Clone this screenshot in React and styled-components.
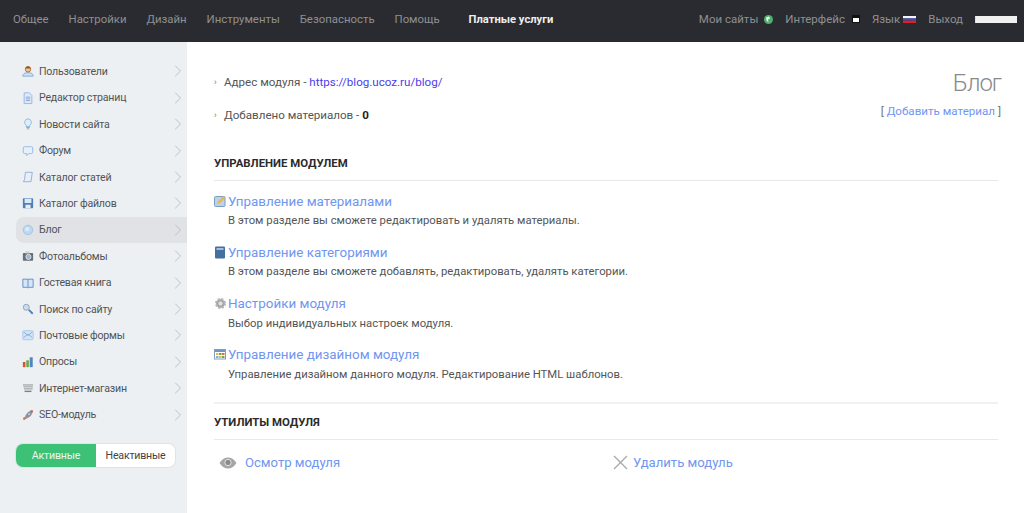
import React from "react";
import styled, { createGlobalStyle } from "styled-components";
import { ChevronRight } from "lucide-react";

const Global = createGlobalStyle`
  html, body { margin: 0; padding: 0; background: #fff; }
  body { font-family: Roboto, "Noto Sans", sans-serif; font-size: 12px; color: #4a4a4a; }
  a { text-decoration: none; }
`;

const Page = styled.div`
  width: 1024px;
  height: 513px;
  overflow: hidden;
  display: flex;
  flex-direction: column;
`;
const TopBar = styled.header`
  height: 42px;
  flex: none;
  background: #2a2b30;
  display: flex;
  align-items: center;
  padding: 0 7px 4px 13px;
  box-sizing: border-box;
`;
const MainNav = styled.nav`
  display: flex;
  align-items: center;
  gap: 19.9px;
`;
const NavLink = styled.a`
  color: #8f9090;
  font-size: 11.4px;
  white-space: nowrap;
`;
const RightLink = styled(NavLink)`
  font-size: 11.5px;
`;
const PaidLink = styled(NavLink)`
  color: #eeeeee;
  font-weight: 700;
  font-size: 11.2px;
  margin-left: 9px;
`;
const RightNav = styled.nav`
  margin-left: auto;
  display: flex;
  align-items: center;
  gap: 12px;
`;
const NavGroup = styled.span`
  display: flex;
  align-items: center;
  gap: ${(p) => p.$gap || 3}px;
`;
const UserBox = styled.span`
  width: 42px;
  height: 7px;
  background: #f0f0f0;
  border-left: 1px solid #cfe3f0;
  box-sizing: border-box;
`;
const Body = styled.div`
  flex: 1;
  display: flex;
  min-height: 0;
`;
const Sidebar = styled.aside`
  width: 187px;
  flex: none;
  background: #edf0f2;
  padding-top: 16.3px;
  box-sizing: border-box;
`;
const MenuList = styled.ul`
  list-style: none;
  margin: 0;
  padding: 0 0 0 16px;
`;
const MenuItem = styled.li`
  height: 26.4px;
  display: flex;
  align-items: center;
  padding-left: 6px;
  border-radius: 8px 0 0 8px;
  background: ${(p) => (p.$active ? "#e0e2e5" : "transparent")};
  color: #505458;
  font-size: 10.6px;
  letter-spacing: -0.2px;
`;
const MenuIcon = styled.span`
  width: 12px;
  height: 14px;
  display: flex;
  align-items: center;
  justify-content: center;
  margin-right: 5px;
  flex: none;
`;
const MenuLabel = styled.span`
  flex: 1;
  white-space: nowrap;
`;
const Chevron = styled(ChevronRight)`
  color: #b4b8bb;
  margin-right: -1px;
  flex: none;
`;
const Toggle = styled.div`
  display: flex;
  margin: 16px 0 0 16px;
  width: 159px;
  height: 23px;
  border-radius: 7px;
  overflow: hidden;
  box-shadow: 0 0 0 1px #e0e3e5;
`;
const ToggleOption = styled.div`
  flex: ${(p) => (p.$active ? "0 0 80px" : "1")};
  display: flex;
  align-items: center;
  justify-content: center;
  font-size: 10.6px;
  letter-spacing: -0.2px;
  color: ${(p) => (p.$active ? "#e8f8ef" : "#444")};
  background: ${(p) => (p.$active ? "#3cc177" : "#fff")};
`;
const Content = styled.main`
  flex: 1;
  padding: 30px 26px 0 27px;
  min-width: 0;
`;
const Summary = styled.div`
  display: flex;
  justify-content: space-between;
  height: 83px;
`;
const Facts = styled.ul`
  list-style: none;
  margin: 0;
  padding: 0;
`;
const Fact = styled.li`
  display: flex;
  align-items: center;
  height: 19px;
  margin-bottom: 14px;
  font-size: 11.6px;
  color: #555;
  white-space: pre;
`;
const Bullet = styled.span`
  width: 10px;
  color: #777;
  font-size: 9px;
  flex: none;
`;
const UrlLink = styled.a`
  color: #4a3cf0;
`;
const Strong = styled.b`
  color: #222;
`;
const TitleBox = styled.div`
  text-align: right;
  margin-right: -3px;
`;
const Title = styled.h1`
  margin: -3px 0 0;
  font-size: 24px;
  font-weight: 300;
  letter-spacing: -1px;
  line-height: 28px;
  color: #8a8a8a;
`;
const AddLine = styled.div`
  font-size: 11.6px;
  color: #777;
  margin-top: 7px;
`;
const Link = styled.a`
  color: #7096f0;
`;
const SectionTitle = styled.h2`
  margin: 0;
  font-size: 11.4px;
  font-weight: 700;
  line-height: 16px;
  color: #2b2b2b;
  text-transform: uppercase;
  padding-bottom: 9px;
  border-bottom: 1px solid #e6e8e9;
`;
const Entries = styled.div`
  padding-top: 10px;
  padding-bottom: 6px;
  border-bottom: 2px solid #f0f1f2;
`;
const Entry = styled.div`
  height: 51.3px;
  box-sizing: border-box;
`;
const EntryHead = styled.div`
  display: flex;
  align-items: center;
  height: 20px;
`;
const EntryIcon = styled.span`
  width: 14px;
  display: flex;
  flex: none;
`;
const EntryLink = styled(Link)`
  font-size: 13.4px;
`;
const EntryText = styled.div`
  margin: 1px 0 0 14px;
  font-size: 11.3px;
  line-height: 17px;
  color: #555;
`;
const UtilSection = styled.section`
  padding-top: 10px;
`;
const Utils = styled.div`
  display: flex;
  padding: 15px 0 0 5px;
`;
const Util = styled.div`
  display: flex;
  align-items: center;
  gap: ${(p) => p.$gap}px;
  width: ${(p) => p.$w}px;
  font-size: 13.1px;
`;

const Svg = ({ children, s = 14, w }) => (
  <svg width={w || s} height={s} viewBox={`0 0 ${w || s} ${s}`} style={{ display: "block" }}>
    {children}
  </svg>
);

const icons = {
  user: (
    <Svg>
      <path d="M1 13c0-3 2-4 6-4s6 1 6 4z" fill="#cfe2f5" stroke="#7ca4d4" />
      <circle cx="7" cy="5" r="3.2" fill="#f3c48f" stroke="#a8682c" />
      <path d="M4 4c1-3 5-3 6 0z" fill="#8a5a2a" />
    </Svg>
  ),
  page: (
    <Svg>
      <path d="M2.5 1h6l3 3v9.500h-9z" fill="#dfeafa" stroke="#8fb1dc" />
      <path d="M4.500 6h5M4.500 8h5M4.500 10h5" stroke="#7ba0d0" />
    </Svg>
  ),
  bulb: (
    <Svg>
      <path d="M7 1a4 4 0 0 1 2.200 7.300V10H4.800V8.300A4 4 0 0 1 7 1z" fill="#dceefa" stroke="#85b3d9" />
      <path d="M5 11h4M5.500 12.700h3" stroke="#8a97a5" />
    </Svg>
  ),
  forum: (
    <Svg>
      <path d="M1.500 3.500q0-1.500 1.500-1.500h8q1.500 0 1.500 1.500v5q0 1.500-1.500 1.500H8l-2.500 2.500V10H3q-1.500 0-1.500-1.500z" fill="#e6f0fb" stroke="#8db5e0" />
    </Svg>
  ),
  articles: (
    <Svg>
      <path d="M4 1.500h8L10.500 12.500H1.500L3 10z" fill="#e8eff8" stroke="#88aad2" />
    </Svg>
  ),
  save: (
    <Svg>
      <rect x="1" y="1.500" width="12" height="11.500" rx="1" fill="#4f7fb5" />
      <rect x="3" y="2" width="8" height="5" fill="#dbe8f6" />
      <rect x="4" y="9" width="6" height="4" fill="#e8eef4" />
    </Svg>
  ),
  blog: (
    <Svg>
      <circle cx="7" cy="7" r="5.500" fill="#bcd8f3" stroke="#9dbfdf" />
      <circle cx="6" cy="6" r="2.500" fill="#dcecfa" />
    </Svg>
  ),
  photo: (
    <Svg>
      <rect x="1" y="3.500" width="12" height="9" rx="1" fill="#6a6f75" />
      <rect x="4" y="1.500" width="5" height="2.500" fill="#cfd3d6" />
      <circle cx="7.500" cy="8" r="3" fill="#9db8d4" stroke="#e5e7e9" />
    </Svg>
  ),
  book: (
    <Svg>
      <path d="M1 2.500h5.500L7 3.500l.5-1H13V12H8l-1 1-1-1H1z" fill="#d6e6f7" stroke="#4f86c2" />
      <path d="M7 3.500V12" stroke="#4f86c2" />
    </Svg>
  ),
  search: (
    <Svg>
      <circle cx="5" cy="5" r="3.500" fill="#c7ddf5" stroke="#8c9aa8" />
      <path d="M8 8l4.500 4.500" stroke="#4e7fb5" strokeWidth="2.200" />
    </Svg>
  ),
  mail: (
    <Svg>
      <rect x="1" y="2" width="12" height="10.500" rx="1.500" fill="#d4e5f9" stroke="#a3c3ea" />
      <path d="M2 10l5-4 5 4M2 3.500l5 4 5-4" fill="none" stroke="#7fa8dc" />
    </Svg>
  ),
  poll: (
    <Svg>
      <rect x="1" y="7" width="3" height="6" fill="#d8503c" />
      <rect x="5" y="5" width="3" height="8" fill="#6aa84f" />
      <rect x="9" y="1.500" width="3.500" height="11.500" fill="#4f86c2" />
    </Svg>
  ),
  cart: (
    <Svg>
      <path d="M1 2.500h12l-1 7H3z" fill="#a8adb0" />
      <path d="M2 4.500h11M2.500 6.500h10M3 8.500h9" stroke="#e5e7e9" strokeWidth=".8" />
      <path d="M3 11h8" stroke="#7b8083" strokeWidth="1.500" />
    </Svg>
  ),
  rocket: (
    <Svg>
      <path d="M12.500 1.500C8 2 5 5 3.500 9l2 2c4-1.500 7-4.500 7-9.500z" fill="#8d9299" />
      <path d="M12.500 1.500v3l-3-2.800z" fill="#d8503c" />
      <circle cx="8.300" cy="6" r="1.300" fill="#a9cdf0" />
      <path d="M3.500 9L1 10.500 2 13l3.500-2z" fill="#c97a4a" />
    </Svg>
  ),
};

const menu = [
  ["user", "Пользователи"],
  ["page", "Редактор страниц"],
  ["bulb", "Новости сайта"],
  ["forum", "Форум"],
  ["articles", "Каталог статей"],
  ["save", "Каталог файлов"],
  ["blog", "Блог", true],
  ["photo", "Фотоальбомы"],
  ["book", "Гостевая книга"],
  ["search", "Поиск по сайту"],
  ["mail", "Почтовые формы"],
  ["poll", "Опросы"],
  ["cart", "Интернет-магазин"],
  ["rocket", "SEO-модуль"],
];

const entryIcons = {
  edit: (
    <Svg s={12} w={12}>
      <rect x="0.500" y="1.500" width="10.500" height="10" rx="1" fill="#bcd2ea" stroke="#7d9cc0" />
      <path d="M3 9l1-2.500L9.500 1l2 1.500L6 8z" fill="#e9b93f" />
    </Svg>
  ),
  cat: (
    <Svg s={13} w={12}>
      <rect x="1" y="0.500" width="10" height="12" rx="1" fill="#44709f" />
      <rect x="2.500" y="2" width="7" height="2" fill="#9fbedd" />
    </Svg>
  ),
  gear: (
    <Svg s={13} w={13}>
      <circle cx="6.500" cy="6.500" r="4.300" fill="#9c9c9c" stroke="#b5b5b5" strokeWidth="2.500" strokeDasharray="2 1.400" />
      <circle cx="6.500" cy="6.500" r="2.200" fill="#dedede" />
    </Svg>
  ),
  design: (
    <Svg s={11} w={12}>
      <rect x="0.500" y="0.500" width="11" height="9.500" fill="#fff" stroke="#7f9fc4" />
      <rect x="1" y="1" width="10" height="2" fill="#6f95c4" />
      <rect x="2" y="4" width="2.500" height="2" fill="#e8b93f" />
      <rect x="5" y="4" width="2.500" height="2" fill="#6aa84f" />
      <rect x="8" y="4" width="2.500" height="2" fill="#d8704c" />
      <rect x="2" y="7" width="2.500" height="2" fill="#7fb0de" />
      <rect x="5" y="7" width="2.500" height="2" fill="#e8b93f" />
      <rect x="8" y="7" width="2.500" height="2" fill="#6aa84f" />
    </Svg>
  ),
};

const entries = [
  ["edit", "Управление материалами", "В этом разделе вы сможете редактировать и удалять материалы."],
  ["cat", "Управление категориями", "В этом разделе вы сможете добавлять, редактировать, удалять категории."],
  ["gear", "Настройки модуля", "Выбор индивидуальных настроек модуля."],
  ["design", "Управление дизайном модуля", "Управление дизайном данного модуля. Редактирование HTML шаблонов."],
];

export default function App() {
  return (
    <Page>
      <Global />
      <TopBar>
        <MainNav>
          {["Общее", "Настройки", "Дизайн", "Инструменты", "Безопасность", "Помощь"].map((t) => (
            <NavLink key={t}>{t}</NavLink>
          ))}
          <PaidLink>Платные услуги</PaidLink>
        </MainNav>
        <RightNav>
          <NavGroup $gap={6}>
            <RightLink>Мои сайты</RightLink>
            <Svg s={9} w={9}>
              <circle cx="4.500" cy="4.500" r="4.500" fill="#4caf6a" />
              <path d="M2 2.500l3-1 1 2-2 1 .5 3-2-2z" fill="#eef6f0" />
            </Svg>
          </NavGroup>
          <NavGroup $gap={7}>
            <RightLink>Интерфейс</RightLink>
            <Svg s={8} w={8}>
              <rect width="8" height="8" fill="#111" />
              <rect x="1" y="3" width="6" height="4" fill="#fff" />
            </Svg>
          </NavGroup>
          <NavGroup $gap={3}>
            <RightLink>Язык</RightLink>
            <Svg s={7} w={13}>
              <rect width="13" height="2.400" fill="#f4f4f8" />
              <rect y="2.400" width="13" height="2.300" fill="#3a4fb8" />
              <rect y="4.700" width="13" height="2.300" fill="#e02020" />
            </Svg>
          </NavGroup>
          <RightLink>Выход</RightLink>
          <UserBox />
        </RightNav>
      </TopBar>
      <Body>
        <Sidebar>
          <MenuList>
            {menu.map(([icon, label, active]) => (
              <MenuItem key={label} $active={active}>
                <MenuIcon>{icons[icon]}</MenuIcon>
                <MenuLabel>{label}</MenuLabel>
                <Chevron size={20} strokeWidth={1} />
              </MenuItem>
            ))}
          </MenuList>
          <Toggle>
            <ToggleOption $active>Активные</ToggleOption>
            <ToggleOption>Неактивные</ToggleOption>
          </Toggle>
        </Sidebar>
        <Content>
          <Summary>
            <Facts>
              <Fact>
                <Bullet>›</Bullet>Адрес модуля - <UrlLink>https://blog.ucoz.ru/blog/</UrlLink>
              </Fact>
              <Fact>
                <Bullet>›</Bullet>Добавлено материалов - <Strong>0</Strong>
              </Fact>
            </Facts>
            <TitleBox>
              <Title>Блог</Title>
              <AddLine>
                [ <Link>Добавить материал</Link> ]
              </AddLine>
            </TitleBox>
          </Summary>
          <SectionTitle>Управление модулем</SectionTitle>
          <Entries>
            {entries.map(([icon, title, text]) => (
              <Entry key={title}>
                <EntryHead>
                  <EntryIcon>{entryIcons[icon]}</EntryIcon>
                  <EntryLink>{title}</EntryLink>
                </EntryHead>
                <EntryText>{text}</EntryText>
              </Entry>
            ))}
          </Entries>
          <UtilSection>
            <SectionTitle>Утилиты модуля</SectionTitle>
            <Utils>
              <Util $gap={8} $w={394}>
                <Svg s={12} w={18}>
                  <path d="M0.500 6C3 2 6 .500 9 .500S15 2 17.500 6C15 10 12 11.500 9 11.500S3 10 .5 6z" fill="#a5a5a5" />
                  <circle cx="9" cy="5.500" r="3.200" fill="#8a8a8a" stroke="#e3e3e3" />
                </Svg>
                <Link>Осмотр модуля</Link>
              </Util>
              <Util $gap={5} $w={200}>
                <Svg s={15} w={15}>
                  <path d="M1 1l13 13M14 1L1 14" stroke="#a8a8a8" strokeWidth="1.300" />
                </Svg>
                <Link>Удалить модуль</Link>
              </Util>
            </Utils>
          </UtilSection>
        </Content>
      </Body>
    </Page>
  );
}
